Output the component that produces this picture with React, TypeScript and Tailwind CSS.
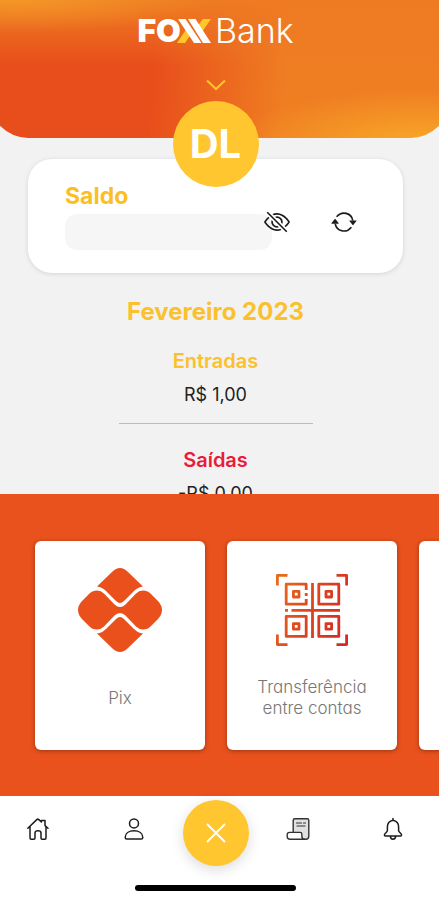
import { useState } from "react";
import { BsArrowRepeat, BsEyeSlash } from "react-icons/bs";

const HomeIcon = () => (
  <svg className="size-6" viewBox="0 0 24 24" fill="none" stroke="#1c1c1c" strokeWidth="1.5" strokeLinejoin="round" strokeLinecap="round">
    <path d="M1.8 11.2 10.8 2.6q1-.9 2 0l2.6 2.4V3.6h3.6v5l3 2.6M4 9.4V21q0 1.2 1.2 1.2h2.6q1.2 0 1.2-1.2v-5q0-2.2 3-2.2t3 2.2v5q0 1.2 1.2 1.2h2.6q1.2 0 1.2-1.2V9.4" />
  </svg>
);

const UserIcon = () => (
  <svg className="size-6" viewBox="0 0 24 24" fill="none" stroke="#1c1c1c" strokeWidth="1.5" strokeLinejoin="round">
    <circle cx="12" cy="6.4" r="4.5" />
    <path d="M3.2 20.4c0-4.2 3.8-6.6 8.8-6.6s8.8 2.4 8.8 6.6q0 1.7-1.6 1.7H4.8q-1.6 0-1.6-1.7Z" />
  </svg>
);

const ReceiptIcon = () => (
  <svg className="size-6" viewBox="0 0 24 24" fill="none" stroke="#333" strokeWidth="1.4" strokeLinejoin="round" strokeLinecap="round">
    <path d="M7.2 15V3.4q0-1.600 1.600-1.600h12.400q1.600 0 1.600 1.600v15.800q0 3-3 3H17" fill="#e0e0e0" />
    <path d="M3.600 15.400h10.600q1.600 0 1.600 1.600v1.800q0 3.400 2.600 3.400H4q-2.800 0-2.800-2.800v-1.600q0-2.400 2.400-2.400Z" fill="#fff" />
    <path d="M10.500 6h5M17.500 6h2M11 9h8" strokeWidth="1.2" />
  </svg>
);

const BellIcon = () => (
  <svg className="size-6" viewBox="0 0 24 24" fill="none" stroke="#1c1c1c" strokeWidth="1.5" strokeLinejoin="round" strokeLinecap="round">
    <path d="M12 1.5v1.700M12 3.200c-3.800.8-5.600 3.400-5.600 6.600v3.600c0 1.800-3 2.800-3 4.600q0 1 1 1h15.200q1 0 1-1c0-1.800-3-2.800-3-4.600V9.800c0-3.200-1.800-5.800-5.600-6.600ZM9.400 19c0 1.800 1 3.200 2.600 3.200s2.600-1.400 2.600-3.200" />
  </svg>
);

const PixIcon = () => (
  <svg className="size-[84px]" viewBox="0 0 84 84" fill="#e9501c">
    <path d="M34 4Q42-4 50 4L65 18.500Q60 19 56 23L46 33Q42 37 38 33L28 23Q24 19 19 18.500Z" />
    <path d="M34 80Q42 88 50 80L65 65.500Q60 65 56 61L46 51Q42 47 38 51L28 61Q24 65 19 65.500Z" />
    <path d="M19 22.500Q23 22.500 26 25.500L36.500 36.500Q42 41.500 47.500 36.500L58 25.500Q61 22.500 65 22.500Q70 22.500 73 26L80 33Q88 42 80 51L73 58Q70 61.500 65 61.500Q61 61.500 58 58.500L47.500 47.500Q42 42.500 36.500 47.500L26 58.500Q23 61.500 19 61.500Q14 61.500 11 58L4 51Q-4 42 4 33L11 26Q14 22.500 19 22.500Z" />
  </svg>
);

const QrIcon = () => (
  <svg className="size-[72px]" viewBox="0 0 72 72" fill="none" stroke="url(#qr)" strokeWidth="2.8" strokeLinejoin="round">
    <defs>
      <linearGradient id="qr" gradientUnits="userSpaceOnUse" x1="0" y1="20" x2="72" y2="50">
        <stop offset="0" stopColor="#e8691b" />
        <stop offset="0.5" stopColor="#dc4420" />
        <stop offset="1" stopColor="#d42a25" />
      </linearGradient>
    </defs>
    <path d="M1.400 11.500V1.400H11.500M60.500 1.400H70.600V11.500M70.600 60.500V70.600H60.500M11.500 70.600H1.400V60.500" />
    <path d="M30.200 16V10.200H10.200V30.200H30.200V25M30.200 19v3" />
    <path d="M42.800 10.200h20v20h-20zM10.200 42.400h20v20h-20zM42.800 42.400h20v20h-20z" />
    <path d="M17.400 17.400h5.600V23h-5.600zM50 17.400h5.600V23H50zM17.400 49.600h5.600v5.600h-5.600zM50 49.600h5.600v5.600H50z" />
    <path d="M36.500 9V64M15.500 36.400H64M9 36.400h3" />
  </svg>
);

const Logo = () => (
  <div className="flex items-center justify-center text-[34px] leading-8 text-white">
    <span className="text-[32px] font-black">FO</span>
    <svg className="-ml-1 mr-1 h-6 w-[34px]" viewBox="0 0 34 24">
      <path d="M0 24h8l6-9-4-6zM26 0h8l-9 13-4.500-6z" fill="#ffc629" />
      <path d="M1 0h7.500l16 24h-7.500zM11 0h7.500l15.500 24h-8z" fill="#fff" />
    </svg>
    <span className="font-light">Bank</span>
  </div>
);

const shortcuts = [
  { label: "Pix", icon: <PixIcon /> },
  { label: "Transferência entre contas", icon: <QrIcon /> },
  { label: "", icon: null },
];

const App = () => {
  const [open, setOpen] = useState(true);

  return (
    <div className="flex h-screen flex-col overflow-hidden bg-[#f2f2f2] font-[Inter,sans-serif] text-[#222]">
      <header className="relative -mx-2.5 h-[138px] shrink-0 rounded-b-[38px] bg-[radial-gradient(ellipse_42%_42%_at_94%_106%,#f9a928_0%,transparent_100%),radial-gradient(ellipse_45%_28%_at_5%_-4%,#f59a28_0%,transparent_100%),linear-gradient(to_bottom,#ee7a22_0%,#ee7a2299_20%,transparent_48%),linear-gradient(95deg,#e84e1b_36%,#ef7d22_64%)] pr-2 pt-[15px]">
        <Logo />
        <button aria-label="Expandir" className="mx-auto mt-8 block">
          <svg className="h-3 w-5" viewBox="0 0 20 12" fill="none" stroke="#ffc629" strokeWidth="2">
            <path d="m1 1.500 9 8.500 9-8.500" />
          </svg>
        </button>
        <div className="absolute inset-x-0 top-[101px] z-10 flex justify-center pr-2">
          <div className="flex size-[86px] items-center justify-center rounded-full bg-[#ffc62f] text-[40px] font-bold text-white">
            DL
          </div>
        </div>
      </header>

      <main className="min-h-0 flex-1 overflow-hidden pl-7 pr-9 pt-[21px]">
        <section className="h-[114px] rounded-3xl bg-white pl-[37px] pr-[46px] pt-6 shadow-[0_1px_5px_rgba(0,0,0,0.12)]">
          <h2 className="text-[23px] font-bold leading-[26px] text-[#fbbf24]">Saldo</h2>
          <div className="flex items-start">
            <div className="mt-[5px] h-9 w-[207px] rounded-xl bg-[#f6f6f6]" />
            <button aria-label="Mostrar saldo" className="-ml-2 text-[#1c1c1c]">
              <BsEyeSlash className="size-[26px]" />
            </button>
            <button aria-label="Atualizar" className="ml-auto text-[#1c1c1c]">
              <BsArrowRepeat className="size-[26px]" />
            </button>
          </div>
        </section>

        <section className="flex flex-col items-center pt-6 text-center">
          <h2 className="text-[24px] font-bold leading-[30px] text-[#fbc02d]">Fevereiro 2023</h2>
          <h3 className="mt-5 text-[20px] font-semibold leading-[28px] text-[#fbc02d]">Entradas</h3>
          <p className="mt-1 text-[18px] leading-[32px]">R$ 1,00</p>
          <hr className="mt-3 w-[194px] border-t border-[#bdbdbd]" />
          <h3 className="mt-[22px] text-[20px] font-semibold leading-[28px] text-[#ea1c3c]">Saídas</h3>
          <p className="mt-1 text-[18px] leading-[32px]">-R$ 0,00</p>
        </section>
      </main>

      <section className="flex h-[302px] shrink-0 items-start gap-[22px] overflow-hidden bg-[#e9511d] pl-[35px] pt-[47px]">
        {shortcuts.map((item, i) => (
          <button
            key={i}
            aria-label={item.label || "Mais"}
            className="flex h-[209px] w-[170px] shrink-0 flex-col items-center rounded-md bg-white pt-[26px] shadow-[0_1px_4px_rgba(0,0,0,0.35)]"
          >
            <span className="flex h-[86px] items-center">{item.icon}</span>
            <span className="mt-6 flex h-[42px] w-[130px] items-center justify-center text-[17px] font-light leading-[21px] text-[#777] [font-feature-settings:'cv11']">
              {item.label}
            </span>
          </button>
        ))}
      </section>

      <nav className="h-[104px] shrink-0 bg-white pl-[26px] pr-[34px] pt-1">
        <div className="flex items-start">
          <div className="flex flex-1 justify-between pt-[17px]">
            <button aria-label="Início"><HomeIcon /></button>
            <button aria-label="Perfil"><UserIcon /></button>
          </div>
          <button
            aria-label="Fechar"
            onClick={() => setOpen(!open)}
            className="mx-[37px] flex size-[66px] items-center justify-center rounded-full bg-[#ffc62f] shadow-[0_4px_14px_rgba(0,0,0,0.14)]"
          >
            <svg className="size-5" viewBox="0 0 20 20" stroke="#fff" strokeWidth="1.8">
              <path d="m1 1 18 18M19 1 1 19" />
            </svg>
          </button>
          <div className="flex flex-1 justify-between pt-[17px]">
            <button aria-label="Extrato"><ReceiptIcon /></button>
            <button aria-label="Notificações"><BellIcon /></button>
          </div>
        </div>
        <div className="mx-auto mt-[19px] h-[6px] w-[161px] rounded-full bg-black" />
      </nav>
    </div>
  );
};

export default App;
